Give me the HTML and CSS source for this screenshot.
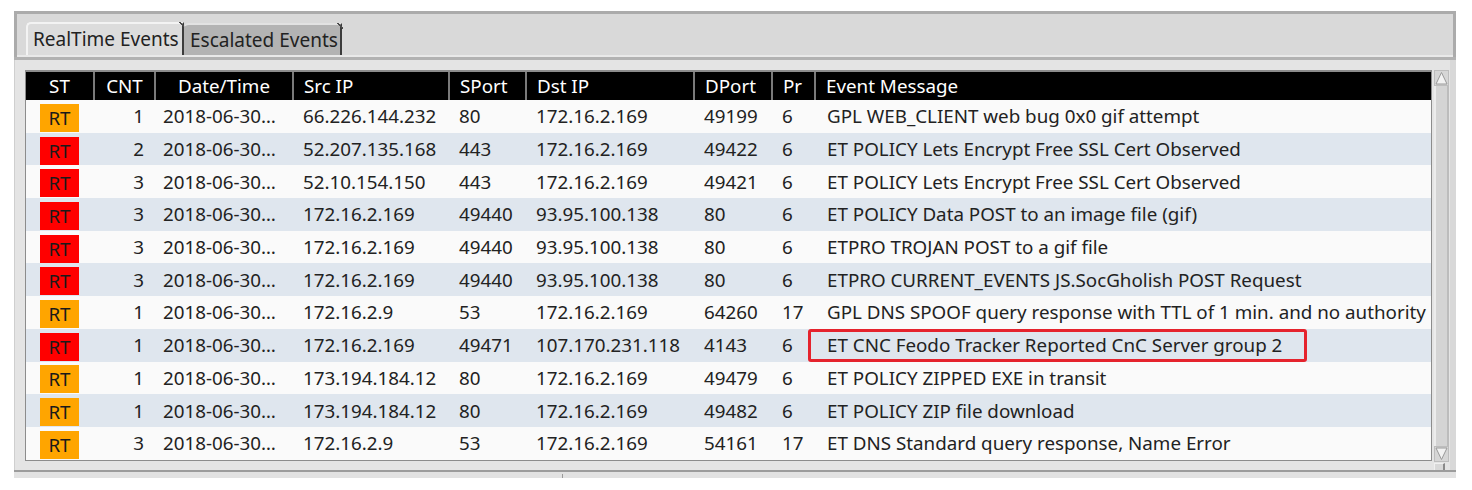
FILE: index.html
```html
<!DOCTYPE html>
<html>
<head>
<meta charset="utf-8">
<link rel="stylesheet" href="styles.css">
</head>
<body>
<div class="window">
  <div class="tabbar">
    <div class="tab active">RealTime Events<span class="notch"></span></div>
    <div class="tab inactive">Escalated Events<span class="notch"></span></div>
  </div>
  <div class="panel">
    <div class="frame">
      <div class="tablewrap">
        <table class="events">
          <colgroup>
            <col class="c-st"><col class="c-cnt"><col class="c-dt"><col class="c-src"><col class="c-sp"><col class="c-dst"><col class="c-dp"><col class="c-pr"><col class="c-msg">
          </colgroup>
          <thead>
            <tr>
              <th class="center">ST</th><th class="center">CNT</th><th class="center">Date/Time</th><th>Src IP</th><th>SPort</th><th>Dst IP</th><th>DPort</th><th>Pr</th><th class="last">Event Message</th>
            </tr>
          </thead>
          <tbody>
            <tr><td class="st"><span class="badge orange">RT</span></td><td class="cnt">1</td><td class="dt">2018-06-30…</td><td>66.226.144.232</td><td>80</td><td>172.16.2.169</td><td>49199</td><td>6</td><td class="msg">GPL WEB_CLIENT web bug 0x0 gif attempt</td></tr>
            <tr><td class="st"><span class="badge red">RT</span></td><td class="cnt">2</td><td class="dt">2018-06-30…</td><td>52.207.135.168</td><td>443</td><td>172.16.2.169</td><td>49422</td><td>6</td><td class="msg">ET POLICY Lets Encrypt Free SSL Cert Observed</td></tr>
            <tr><td class="st"><span class="badge red">RT</span></td><td class="cnt">3</td><td class="dt">2018-06-30…</td><td>52.10.154.150</td><td>443</td><td>172.16.2.169</td><td>49421</td><td>6</td><td class="msg">ET POLICY Lets Encrypt Free SSL Cert Observed</td></tr>
            <tr><td class="st"><span class="badge red">RT</span></td><td class="cnt">3</td><td class="dt">2018-06-30…</td><td>172.16.2.169</td><td>49440</td><td>93.95.100.138</td><td>80</td><td>6</td><td class="msg">ET POLICY Data POST to an image file (gif)</td></tr>
            <tr><td class="st"><span class="badge red">RT</span></td><td class="cnt">3</td><td class="dt">2018-06-30…</td><td>172.16.2.169</td><td>49440</td><td>93.95.100.138</td><td>80</td><td>6</td><td class="msg">ETPRO TROJAN POST to a gif file</td></tr>
            <tr><td class="st"><span class="badge red">RT</span></td><td class="cnt">3</td><td class="dt">2018-06-30…</td><td>172.16.2.169</td><td>49440</td><td>93.95.100.138</td><td>80</td><td>6</td><td class="msg">ETPRO CURRENT_EVENTS JS.SocGholish POST Request</td></tr>
            <tr><td class="st"><span class="badge orange">RT</span></td><td class="cnt">1</td><td class="dt">2018-06-30…</td><td>172.16.2.9</td><td>53</td><td>172.16.2.169</td><td>64260</td><td>17</td><td class="msg">GPL DNS SPOOF query response with TTL of 1 min. and no authority</td></tr>
            <tr><td class="st"><span class="badge red">RT</span></td><td class="cnt">1</td><td class="dt">2018-06-30…</td><td>172.16.2.169</td><td>49471</td><td>107.170.231.118</td><td>4143</td><td>6</td><td class="msg"><span class="highlight"></span>ET CNC Feodo Tracker Reported CnC Server group 2</td></tr>
            <tr><td class="st"><span class="badge orange">RT</span></td><td class="cnt">1</td><td class="dt">2018-06-30…</td><td>173.194.184.12</td><td>80</td><td>172.16.2.169</td><td>49479</td><td>6</td><td class="msg">ET POLICY ZIPPED EXE in transit</td></tr>
            <tr><td class="st"><span class="badge orange">RT</span></td><td class="cnt">1</td><td class="dt">2018-06-30…</td><td>173.194.184.12</td><td>80</td><td>172.16.2.169</td><td>49482</td><td>6</td><td class="msg">ET POLICY ZIP file download</td></tr>
            <tr><td class="st"><span class="badge orange">RT</span></td><td class="cnt">3</td><td class="dt">2018-06-30…</td><td>172.16.2.9</td><td>53</td><td>172.16.2.169</td><td>54161</td><td>17</td><td class="msg">ET DNS Standard query response, Name Error</td></tr>
          </tbody>
        </table>
      </div>
      <div class="vscroll">
        <div class="sbtn up">
          <svg width="13" height="14" viewBox="0 0 13 14"><polygon points="6.5,1.5 12,13 1,13" fill="#f2f2f2" stroke="#9a9a9a" stroke-width="1"/></svg>
        </div>
        <div class="track"></div>
        <div class="sbtn down">
          <svg width="13" height="14" viewBox="0 0 13 14"><polygon points="1,1 12,1 6.5,12.5" fill="#f2f2f2" stroke="#9a9a9a" stroke-width="1"/></svg>
        </div>
        <div class="grip"></div>
      </div>
    </div>
  </div>
  <div class="bottombar"><span class="tick"></span></div>
</div>
</body>
</html>
```
FILE: styles.css
```css
html, body {
  margin: 0;
  padding: 0;
  background: #ffffff;
}
body {
  font-family: "Noto Sans", "Open Sans", "DejaVu Sans", sans-serif;
  color: #222222;
}
.window {
  margin: 11px 0 0 14px;
  width: 1442px;
}
.tabbar {
  box-sizing: border-box;
  height: 46px;
  background: #d9d9d9;
  border: 3px solid #ababab;
  border-bottom: none;
  padding: 8px 0 0 9px;
  display: flex;
  align-items: flex-start;
  box-shadow: inset 0 -2px 0 #e9e9e9;
  position: relative;
}
.tabbar::after {
  content: "";
  position: absolute;
  left: -3px;
  right: -3px;
  bottom: -3px;
  height: 3px;
  background: #b2b2b2;
}
.tab {
  position: relative;
  box-sizing: border-box;
  height: 33px;
  font-size: 19px;
  line-height: 30px;
  padding: 0 0 0 5px;
  color: #222;
  white-space: nowrap;
}
.tab.active {
  width: 158px;
  background: #dcdcdc;
  border-top: 2px solid #f3f3f3;
  border-left: 2px solid #f3f3f3;
  border-right: 2px solid #3c3c3c;
  border-top-left-radius: 5px;
}
.tab.inactive {
  width: 158px;
  margin-top: 1px;
  height: 32px;
  background: #b3b3b3;
  border-top: 2px solid #e2e2e2;
  border-right: 2px solid #3c3c3c;
  border-top-left-radius: 5px;
  padding-left: 6px;
}
.notch {
  position: absolute;
  right: -3px;
  top: -2px;
  width: 6px;
  height: 6px;
  background: linear-gradient(45deg, transparent 45%, #4a4a4a 45%, #4a4a4a 65%, transparent 65%);
}
.panel {
  box-sizing: border-box;
  height: 410px;
  margin-top: 3px;
  background: #e4e4e4;
  border-left: 1px solid #cfcfcf;
  border-right: 6px solid #d8d8d8;
  padding: 10px 0 0 10px;
}
.frame {
  display: flex;
  align-items: flex-start;
}
.tablewrap {
  width: 1407px;
  box-sizing: border-box;
  border: 1px solid #8c8c8c;
  border-top: 2px solid #8c8c8c;
  background: #fafafa;
}
.events {
  width: 1405px;
  table-layout: fixed;
  border-collapse: collapse;
  border-spacing: 0;
  font-size: 18.8px;
}
.c-st { width: 68px; }
.c-cnt { width: 61px; }
.c-dt { width: 138px; }
.c-src { width: 156px; }
.c-sp { width: 77px; }
.c-dst { width: 168px; }
.c-dp { width: 78px; }
.c-pr { width: 43px; }
.c-msg { width: 616px; }
.events thead th {
  background: #000000;
  color: #ffffff;
  font-weight: normal;
  height: 28px;
  padding: 0 0 0 10px;
  text-align: left;
  border-right: 2px solid #7a7a7a;
  line-height: 26px;
  white-space: nowrap;
}
.events thead th.center {
  text-align: center;
  padding: 0;
}
.events thead th.last {
  border-right: none;
}
.events tbody tr {
  height: 32.7px;
}
.events tbody tr:nth-child(even) {
  background: #dfe6ee;
}
.events tbody tr:nth-child(odd) {
  background: #fafafa;
}
.events td {
  padding: 0 0 0 10px;
  white-space: nowrap;
  overflow: visible;
  line-height: 30px;
  color: #222;
}
.events td.st {
  padding: 0;
  text-align: center;
}
.events td.cnt {
  text-align: right;
  padding: 0 11px 0 0;
}
.events td.dt {
  padding-left: 8px;
}
.events td.msg {
  position: relative;
  padding-left: 12px;
}
.badge {
  display: inline-block;
  width: 39px;
  height: 28px;
  line-height: 28px;
  text-align: center;
  color: #1a1a1a;
  vertical-align: middle;
  margin-left: -1px;
}
.badge.orange { background: #ffa500; }
.badge.red { background: #ff0000; }
.highlight {
  position: absolute;
  left: -7px;
  top: 0;
  width: 499px;
  height: 33px;
  box-sizing: border-box;
  border: 3px solid #e5232d;
  border-radius: 3px;
}
.vscroll {
  margin-left: 2px;
  width: 15px;
  display: flex;
  flex-direction: column;
}
.sbtn {
  box-sizing: border-box;
  width: 15px;
  height: 16px;
  background: #d6d6d6;
  border: 1px solid #bdbdbd;
  display: flex;
  align-items: center;
  justify-content: center;
}
.track {
  box-sizing: border-box;
  height: 360px;
  background: #d4d4d4;
  border-left: 2px solid #ececec;
  border-right: 2px solid #bcbcbc;
}
.grip {
  box-sizing: border-box;
  width: 11px;
  height: 9px;
  margin-top: 1px;
  background: #d8d8d8;
  border-top: 1px solid #f0f0f0;
  border-left: 1px solid #f0f0f0;
  border-right: 2px solid #8a8a8a;
  border-bottom: 1px solid #8a8a8a;
}
.bottombar {
  position: relative;
  box-sizing: border-box;
  height: 8px;
  background: #e2e2e2;
  border-top: 2px solid #9c9c9c;
}
.tick {
  position: absolute;
  left: 548px;
  top: 2px;
  width: 1px;
  height: 4px;
  background: #9a9a9a;
}
```
